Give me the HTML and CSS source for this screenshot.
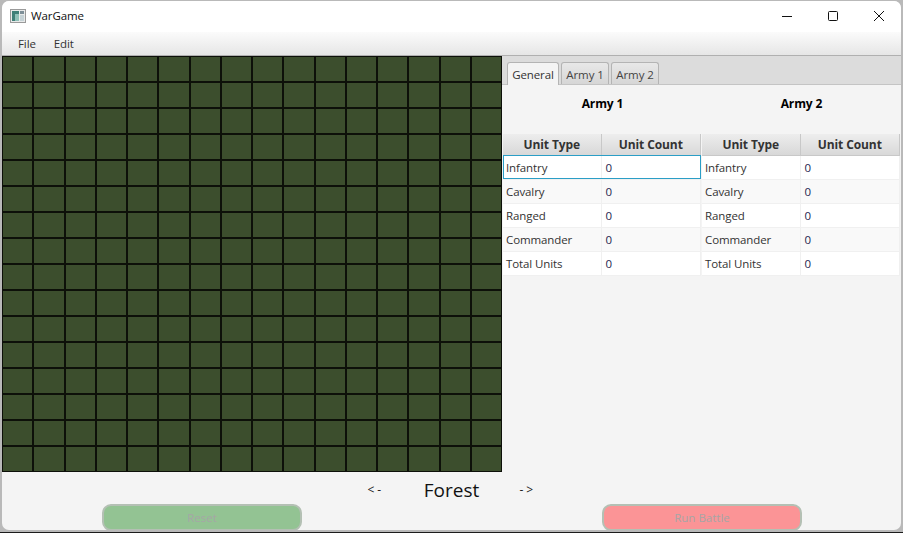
FILE: index.html
```html
<!DOCTYPE html>
<html lang="en">
<head>
    <meta charset="UTF-8">
    <title>WarGame</title>
    <link rel="stylesheet" href="styles.css">
</head>
<body>
    <div class="window">
        <div class="titlebar">
            <svg class="app-icon" width="16" height="14" viewBox="0 0 16 14">
                <rect x="0.5" y="0.5" width="15" height="13" fill="#e8eaea" stroke="#9a9a9a"/>
                <rect x="2" y="2" width="7" height="10" fill="#3f7f78"/>
                <rect x="5" y="5" width="4" height="7" fill="#8fc0b8"/>
                <rect x="10" y="2" width="4" height="3" fill="#7d8f98"/>
                <rect x="10" y="6" width="4" height="6" fill="#c5d2d6"/>
            </svg>
            <span class="app-title">WarGame</span>
            <div class="controls">
                <svg width="12" height="12" viewBox="0 0 12 12"><path d="M1 6.5h10" stroke="#111" fill="none"/></svg>
                <svg width="12" height="12" viewBox="0 0 12 12"><rect x="1.5" y="1.5" width="9" height="9" rx="1" stroke="#111" fill="none"/></svg>
                <svg width="12" height="12" viewBox="0 0 12 12"><path d="M1 1l10 10M11 1L1 11" stroke="#111" fill="none"/></svg>
            </div>
        </div>
        <div class="menubar">
            <span>File</span>
            <span>Edit</span>
        </div>
        <div class="main">
            <div class="board" id="board"></div>
            <div class="side">
                <div class="tabs">
                    <div class="tab active">General</div>
                    <div class="tab">Army 1</div>
                    <div class="tab">Army 2</div>
                </div>
                <div class="armies">
                    <div class="army">
                        <h2>Army 1</h2>
                        <table>
                            <thead><tr><th class="col-type">Unit Type</th><th>Unit Count</th></tr></thead>
                            <tbody>
                                <tr class="focused"><td>Infantry</td><td>0</td></tr>
                                <tr><td>Cavalry</td><td>0</td></tr>
                                <tr><td>Ranged</td><td>0</td></tr>
                                <tr><td>Commander</td><td>0</td></tr>
                                <tr><td>Total Units</td><td>0</td></tr>
                            </tbody>
                        </table>
                    </div>
                    <div class="army">
                        <h2>Army 2</h2>
                        <table>
                            <thead><tr><th class="col-type">Unit Type</th><th>Unit Count</th></tr></thead>
                            <tbody>
                                <tr><td>Infantry</td><td>0</td></tr>
                                <tr><td>Cavalry</td><td>0</td></tr>
                                <tr><td>Ranged</td><td>0</td></tr>
                                <tr><td>Commander</td><td>0</td></tr>
                                <tr><td>Total Units</td><td>0</td></tr>
                            </tbody>
                        </table>
                    </div>
                </div>
            </div>
        </div>
        <div class="terrain">
            <span class="arrow">&lt;-</span>
            <span class="terrain-name">Forest</span>
            <span class="arrow">-&gt;</span>
        </div>
        <div class="actions">
            <button class="btn-reset" disabled>Reset</button>
            <button class="btn-run" disabled>Run Battle</button>
        </div>
    </div>
    <script>
        // 16 x 16 board
        var board = document.getElementById('board');
        for (var i = 0; i < 256; i++) {
            var cell = document.createElement('div');
            cell.className = 'cell';
            board.appendChild(cell);
        }
    </script>
</body>
</html>
```

FILE: styles.css
```css
* {
    margin: 0;
    padding: 0;
    box-sizing: border-box;
}

html, body {
    width: 903px;
    height: 533px;
    overflow: hidden;
}

body {
    font-family: "Open Sans", "Noto Sans", sans-serif;
    font-size: 11.5px;
    letter-spacing: -0.1px;
    color: #333;
    background-color: #b9b9b9;
    padding: 1px 2px 2px 2px;
    border-bottom: 1px solid #1c1c1c;
}

.window {
    width: 899px;
    height: 529px;
    background-color: #f4f4f4;
    border-radius: 7px;
    overflow: hidden;
}

.titlebar {
    height: 31px;
    display: flex;
    align-items: center;
    background-color: #fff;
    padding-left: 8px;
    padding-bottom: 2px;
}

.app-title {
    margin-left: 5px;
    color: #111;
}

.controls {
    margin-left: auto;
    display: flex;
    gap: 34px;
    padding-right: 16px;
}

.menubar {
    height: 24px;
    display: flex;
    align-items: center;
    gap: 18px;
    padding-left: 16px;
    background: linear-gradient(#fbfbfb, #e6e6e6);
    border-bottom: 1px solid #b0b0b0;
}

.main {
    display: flex;
    height: 416px;
}

.board {
    width: 500px;
    height: 416px;
    display: grid;
    grid-template-columns: repeat(16, 1fr);
    grid-template-rows: repeat(16, 1fr);
}

.cell {
    background-color: #3c4e2d;
    border: 1px solid #0d1009;
}

.side {
    width: 399px;
}

.tabs {
    height: 29px;
    display: flex;
    align-items: flex-end;
    gap: 2px;
    padding-left: 5px;
    background-color: #dcdcdc;
    border-bottom: 1px solid #c4c4c4;
}

.tab {
    width: 48px;
    height: 22px;
    line-height: 23px;
    text-align: center;
    color: #444;
    background: linear-gradient(#e8e8e8, #d6d6d6);
    border: 1px solid #b4b4b4;
    border-bottom: none;
    border-radius: 3px 3px 0 0;
}

.tab.active {
    width: 52px;
    height: 23px;
    color: #333;
    background: #f4f4f4;
    margin-bottom: -1px;
}

.armies {
    display: flex;
    padding-left: 1px;
}

.army {
    width: 199px;
}

.army h2 {
    height: 49px;
    padding-top: 10px;
    font-size: 12px;
    font-weight: bold;
    line-height: 18px;
    text-align: center;
    color: #000;
}

table {
    width: 198px;
    border-collapse: collapse;
    table-layout: fixed;
}

.col-type {
    width: 98px;
}

th {
    height: 21px;
    font-size: 12px;
    color: #333;
    background: linear-gradient(#ededed, #d8d8d8);
    border-right: 1px solid #c8c8c8;
    border-bottom: 1px solid #c8c8c8;
}

td {
    height: 24px;
    padding-left: 3px;
    background-color: #fff;
    border-right: 1px solid #f0f0f0;
    border-bottom: 1px solid #f0f0f0;
}

td + td {
    padding-left: 4px;
    color: #25254f;
}

tbody tr:nth-child(even) td {
    background-color: #f9f9f9;
}

.focused {
    outline: 1px solid #2b9ec6;
    outline-offset: -1px;
}

.terrain {
    height: 32px;
    display: flex;
    align-items: center;
    justify-content: center;
    padding-top: 3px;
    color: #222;
}

.terrain-name {
    width: 136px;
    font-size: 19px;
    letter-spacing: 0;
    text-align: center;
    color: #111;
}

.arrow {
    width: 16px;
    font-size: 12px;
    letter-spacing: 3px;
    white-space: nowrap;
    text-align: center;
}

.actions {
    display: flex;
    gap: 300px;
    padding-left: 100px;
}

.actions button {
    width: 200px;
    height: 27px;
    font-family: inherit;
    font-size: 11.5px;
    color: #a6a6a6;
    border: 2px solid #b4c0b4;
    border-radius: 9px;
}

.btn-reset {
    background-color: #93c393;
}

.btn-run {
    background-color: #fb9496;
    border-color: #c4bcbc;
}
```
